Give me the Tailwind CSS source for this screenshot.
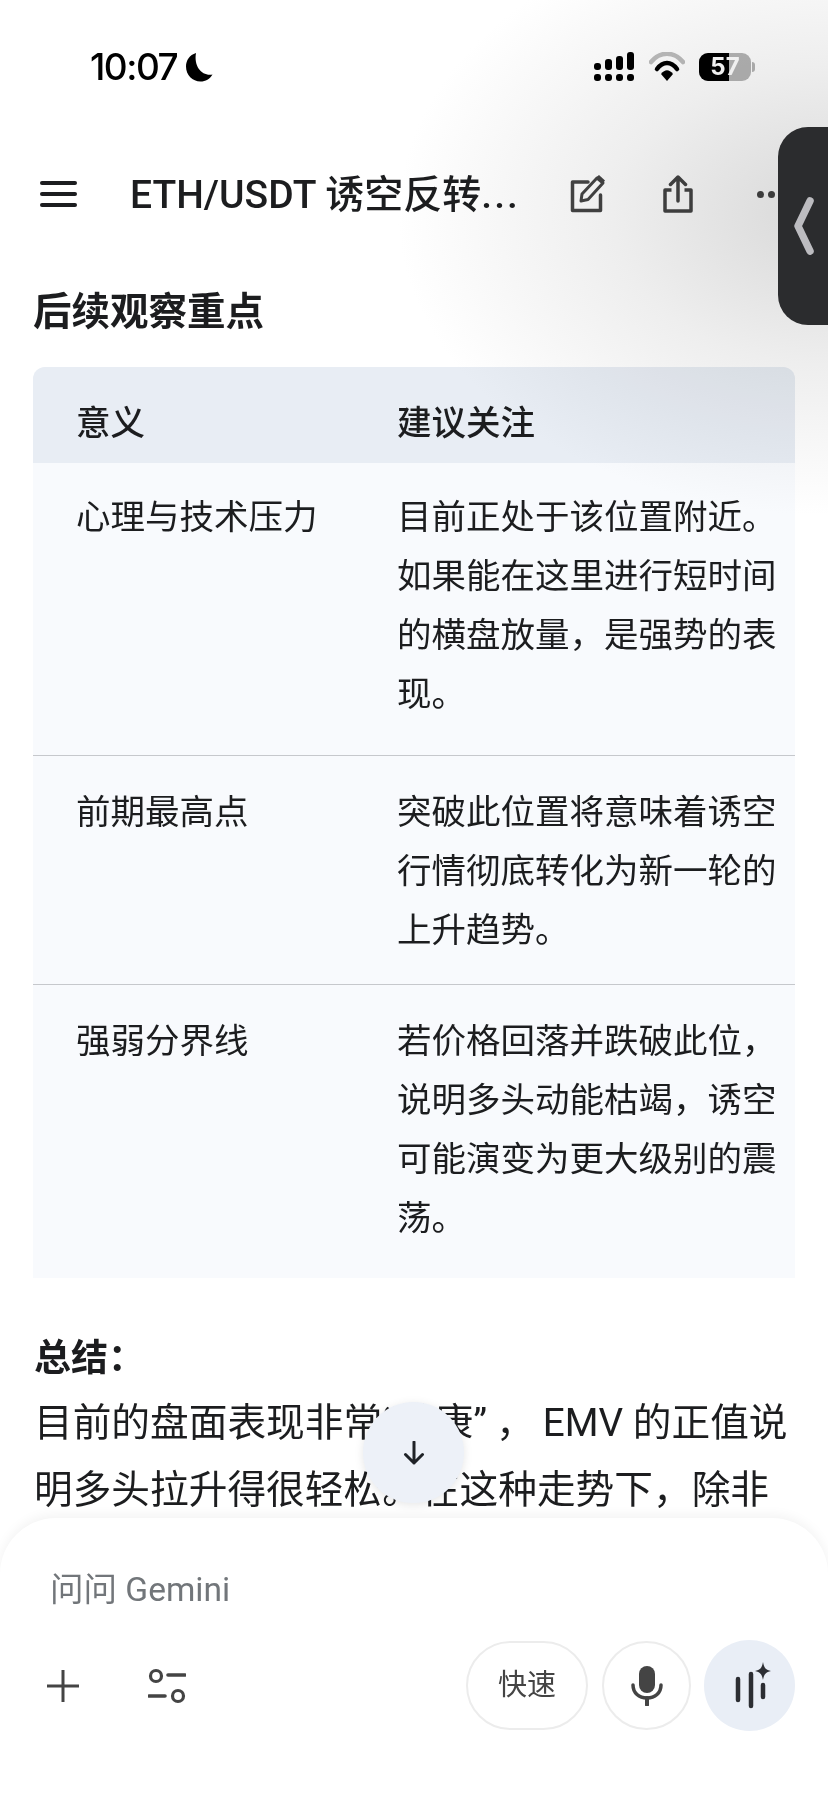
<!DOCTYPE html>
<html lang="zh-CN">
<head>
<meta charset="utf-8">
<script src="https://cdn.jsdelivr.net/npm/@tailwindcss/browser@4"></script>
</head>
<body class="bg-white">
<div class="relative w-[828px] h-[1801px] overflow-hidden bg-white text-[#1c1d1f] font-['Roboto','Noto_Sans_CJK_SC',sans-serif]">

  <!-- status bar -->
  <div class="h-[159px] flex items-start justify-between pt-[52px] pl-[90px] pr-[73px]">
    <div class="flex items-center gap-[8px] h-[30px]">
      <span class="text-[37px] leading-[30px] font-medium text-black font-['Inter',sans-serif] tracking-[-1.5px]">10:07</span>
      <svg class="w-[28px] h-[30px]" viewBox="0 0 28 30"><path d="M11 1C4.500 3 1 8.500 1 14.500 1 23 7.500 29.500 15.500 29.500 20.500 29.500 25 27 27.500 22.500 17.500 24.500 8.500 15 11 1Z" fill="#000"/></svg>
    </div>
    <div class="flex items-center h-[30px]">
      <svg class="w-[41px] h-[30px]" viewBox="0 0 41 30" fill="#000"><rect x="0" y="11" width="7" height="7" rx="3"/><rect x="11" y="7" width="7" height="11" rx="3"/><rect x="22" y="4" width="7" height="14" rx="3"/><rect x="33" y="0" width="7" height="18" rx="3"/><rect x="0" y="22" width="7" height="7" rx="3"/><rect x="11" y="22" width="7" height="7" rx="3"/><rect x="22" y="22" width="7" height="7" rx="3"/><rect x="33" y="22" width="7" height="7" rx="3"/></svg>
      <svg class="w-[36px] h-[30px] ml-[14px]" viewBox="0 0 36 30" fill="none"><path d="M2 10C11-1 25-1 34 10" stroke="#bdbdbd" stroke-width="4.500" stroke-linecap="round"/><path d="M8 17C14 9 22 9 28 17" stroke="#000" stroke-width="4.500" stroke-linecap="round"/><path d="M12 22C16 17 20 17 24 22L18 29Z" fill="#000"/></svg>
      <div class="relative ml-[14px] w-[52px] h-[28px] rounded-[9px] overflow-hidden flex bg-[#b5b5b5]">
        <div class="w-[30px] h-full bg-black"></div>
        <span class="absolute inset-0 flex items-center justify-center text-[24px] leading-none font-bold text-white font-['Inter',sans-serif]">57</span>
      </div>
      <div class="w-[3px] h-[10px] ml-[1px] rounded-r-full bg-[#b5b5b5]"></div>
    </div>
  </div>

  <!-- app bar -->
  <div class="h-[70px] flex items-center pl-[40px]">
    <div class="w-[37px] flex flex-col gap-[7px]">
      <div class="h-[4px] rounded-full bg-[#1c1d1f]"></div>
      <div class="h-[4px] rounded-full bg-[#1c1d1f]"></div>
      <div class="h-[4px] rounded-full bg-[#1c1d1f]"></div>
    </div>
    <div class="ml-[53px] w-[385px] pt-[1px] text-[39px] leading-[44px] whitespace-nowrap font-medium">ETH/USDT 诱空反转<span class="tracking-[2px]">...</span></div>
    <svg class="ml-[55px] w-[36px] h-[38px]" viewBox="0 0 36 38" fill="none"><path d="M18 7H2.500V35.500H30.500V20" stroke="#444" stroke-width="3.500" stroke-linejoin="round" stroke-linecap="round"/><path d="M11 26L12 19 27 3 33 8 18 24.500Z" stroke="#444" stroke-width="3" stroke-linejoin="round"/><path d="M26 2.500L29 0 35 5.500 32.500 9Z" fill="#444"/></svg>
    <svg class="ml-[57px] w-[30px] h-[38px]" viewBox="0 0 30 38" fill="none"><path d="M8.500 15H2V36H28V15H21.500" stroke="#444" stroke-width="3.500" stroke-linejoin="round"/><path d="M15 26V3M7.500 9.500L15 2 22.500 9.500" stroke="#444" stroke-width="3.500" stroke-linecap="round" stroke-linejoin="round"/></svg>
    <div class="ml-[64px] flex gap-[4px]">
      <div class="w-[7px] h-[7px] rounded-full bg-[#444]"></div>
      <div class="w-[7px] h-[7px] rounded-full bg-[#444]"></div>
      <div class="w-[7px] h-[7px] rounded-full bg-[#444]"></div>
    </div>
  </div>

  <!-- content -->
  <div class="px-[33px] pt-[60px]">
    <h2 class="text-[38.500px] leading-[46px] font-bold whitespace-nowrap">后续观察重点</h2>
    <div class="mt-[32px] rounded-t-[12px] overflow-hidden bg-[#f8fafd]">
      <div class="grid grid-cols-[364px_1fr] h-[96px] pt-[16px] bg-[#e8edf4] items-center text-[34.500px] leading-[59px] font-medium">
        <div class="pl-[43px]">意义</div>
        <div>建议关注</div>
      </div>
      <div class="grid grid-cols-[364px_1fr] h-[293px] pt-[25px] text-[34.500px] leading-[59px] whitespace-nowrap border-b border-[#c6c8cc]">
        <div class="pl-[43px]">心理与技术压力</div>
        <div>目前正处于该位置附近。<br>如果能在这里进行短时间<br>的横盘放量，是强势的表<br>现。</div>
      </div>
      <div class="grid grid-cols-[364px_1fr] h-[229px] pt-[27px] text-[34.500px] leading-[59px] whitespace-nowrap border-b border-[#c6c8cc]">
        <div class="pl-[43px]">前期最高点</div>
        <div>突破此位置将意味着诱空<br>行情彻底转化为新一轮的<br>上升趋势。</div>
      </div>
      <div class="grid grid-cols-[364px_1fr] h-[293px] pt-[27px] text-[34.500px] leading-[59px] whitespace-nowrap">
        <div class="pl-[43px]">强弱分界线</div>
        <div>若价格回落并跌破此位，<br>说明多头动能枯竭，诱空<br>可能演变为更大级别的震<br>荡。</div>
      </div>
    </div>
    <div class="pt-[59px] pl-[1px] text-[38.700px] leading-[67px] whitespace-nowrap">
      <div class="font-bold text-[37px] leading-[44px] mb-[8px]">总结：</div>
      <div>目前的盘面表现非常“健康”<span class="ml-[9px]">，</span><span class="ml-[8px]">EMV</span> 的正值说<br>明多头拉升得很轻松。在这种走势下，除非</div>
    </div>
  </div>

  <!-- right-edge shading -->
  <div class="absolute inset-0 pointer-events-none mix-blend-multiply bg-[radial-gradient(ellipse_430px_300px_at_100%_215px,#d8d8d8_0%,#eeeeee_50%,#ffffff_100%)]"></div>

  <!-- side tab -->
  <div class="absolute left-[778px] top-[127px] w-[60px] h-[198px] rounded-l-[30px] bg-[#2b2c2e]">
    <svg class="absolute left-[16px] top-[70px] w-[20px] h-[58px]" viewBox="0 0 20 58" fill="none"><path d="M16 4L4 29 16 54" stroke="#bcbcc0" stroke-width="7.500" stroke-linecap="round" stroke-linejoin="round"/></svg>
  </div>

  <!-- scroll-down button -->
  <div class="absolute left-[363px] top-[1402px] w-[101px] h-[101px] rounded-full bg-[#edf1f8] shadow-[0_2px_10px_rgba(0,0,0,0.10)] flex items-center justify-center">
    <svg class="w-[22px] h-[24px]" viewBox="0 0 22 24" fill="none"><path d="M11 1V22M2.500 13.500L11 22 19.500 13.500" stroke="#1f2227" stroke-width="3" stroke-linecap="round" stroke-linejoin="round"/></svg>
  </div>

  <!-- composer -->
  <div class="absolute left-0 right-0 top-[1518px] bottom-0 bg-white rounded-t-[56px] shadow-[0_-3px_12px_rgba(0,0,0,0.05)] pl-[50px] pr-[33px]">
    <div class="pt-[50px] h-[123px] text-[33.500px] leading-[44px] text-[#72767a]">问问 Gemini</div>
    <div class="flex items-center h-[89px]">
      <svg class="ml-[-4px] w-[34px] h-[34px]" viewBox="0 0 34 34" fill="none"><path d="M17 1V33M1 17H33" stroke="#444" stroke-width="3"/></svg>
      <svg class="ml-[68px] w-[38px] h-[36px]" viewBox="0 0 38 36" fill="none"><circle cx="8" cy="8" r="5.500" stroke="#444" stroke-width="3.200"/><path d="M20 7H37M1 28H17" stroke="#444" stroke-width="3.600" stroke-linecap="round"/><circle cx="30" cy="28" r="5.500" stroke="#444" stroke-width="3.200"/></svg>
      <div class="ml-[280px] w-[122px] h-[89px] rounded-full border-2 border-[#ececec] flex items-center justify-center text-[29px] text-[#444]">快速</div>
      <div class="ml-[14px] w-[89px] h-[89px] rounded-full border-2 border-[#ececec] flex items-center justify-center">
        <svg class="w-[32px] h-[40px]" viewBox="0 0 32 40" fill="none"><rect x="8" y="0" width="16" height="27" rx="8" fill="#444"/><path d="M2 19C2 27 8 32 16 32S30 27 30 19" stroke="#444" stroke-width="3.500" stroke-linecap="round"/><path d="M16 32V39" stroke="#444" stroke-width="4" stroke-linecap="round"/></svg>
      </div>
      <div class="ml-[13px] w-[91px] h-[91px] rounded-full bg-[#e9eef6] flex items-center justify-center">
        <svg class="w-[46px] h-[48px] translate-x-[3px]" viewBox="0 0 46 48" fill="none"><path d="M8 17V38M21 12V44M33 23V35" stroke="#2c2e33" stroke-width="4.500" stroke-linecap="round"/><path d="M33 0C34 6 36 8 41 9 36 10 34 12 33 18 32 12 30 10 25 9 30 8 32 6 33 0Z" fill="#2c2e33"/></svg>
      </div>
    </div>
  </div>
</div>
</body>
</html>
